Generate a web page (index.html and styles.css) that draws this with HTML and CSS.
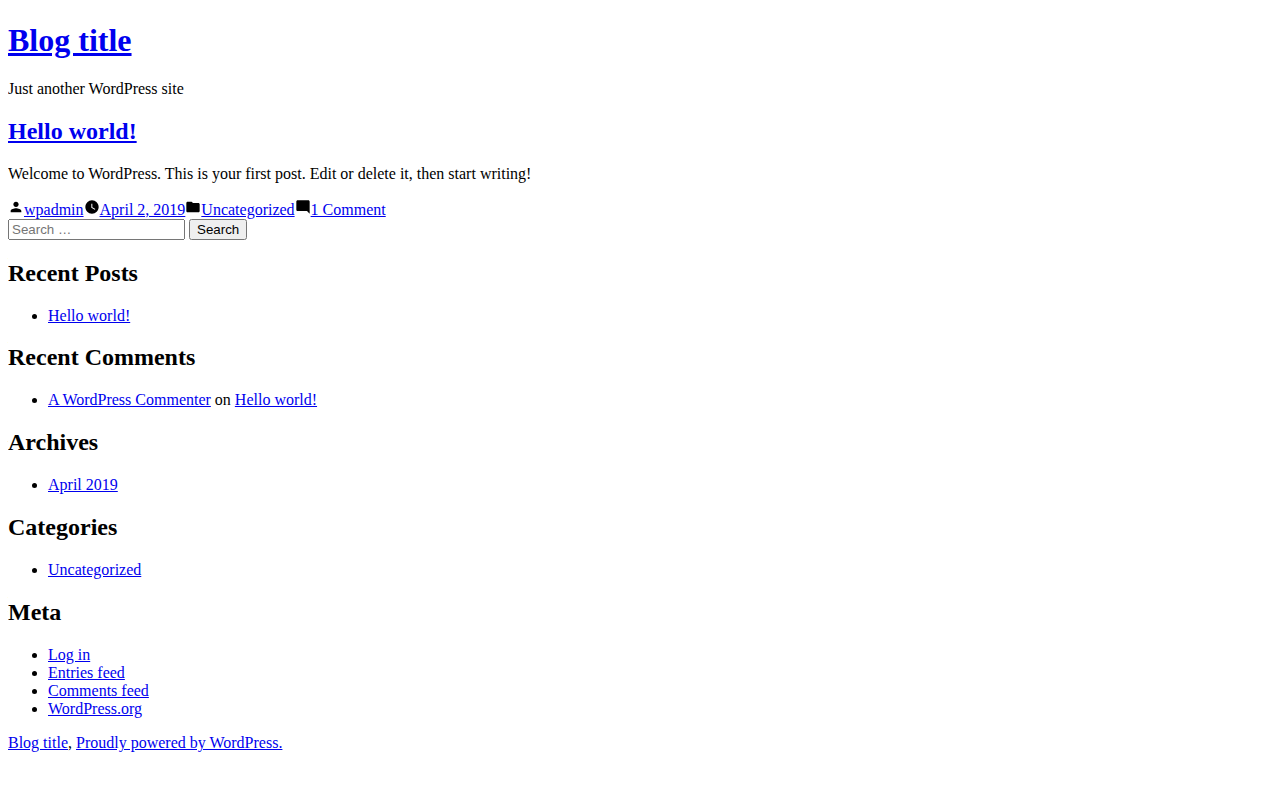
FILE: index.html
```html
<!DOCTYPE html>
<html lang="en">
<head>
    <meta charset="UTF-8">
    <meta name="viewport" content="width=device-width, initial-scale=1.0">
    <title>Blog title</title>
    <link rel="stylesheet" href="styles.css">
</head>
<body>
    <header>
        <h1 class="site-title"><a href="#">Blog title</a></h1>
        <p>Just another WordPress site</p>
    </header>

    <article>
        <h2><a href="#">Hello world!</a></h2>
        <p>Welcome to WordPress. This is your first post. Edit or delete it, then start writing!</p>
        <footer class="entry-footer">
            <svg class="icon" viewBox="0 0 24 24"><path d="M12 12c2.21 0 4-1.79 4-4s-1.79-4-4-4-4 1.79-4 4 1.79 4 4 4zm0 2c-2.67 0-8 1.34-8 4v2h16v-2c0-2.66-5.33-4-8-4z"/></svg><a href="#">wpadmin</a><svg class="icon" viewBox="0 0 24 24"><path d="M12 2C6.500 2 2 6.500 2 12s4.500 10 10 10 10-4.500 10-10S17.500 2 12 2zm4.200 14.200L11 13V7h1.500v5.200l4.500 2.700-.8 1.300z"/></svg><a href="#">April 2, 2019</a><svg class="icon" viewBox="0 0 24 24"><path d="M10 4H4c-1.100 0-2 .9-2 2v12c0 1.100.9 2 2 2h16c1.100 0 2-.9 2-2V8c0-1.100-.9-2-2-2h-8l-2-2z"/></svg><a href="#">Uncategorized</a><svg class="icon" viewBox="0 0 24 24"><path d="M21.990 4c0-1.100-.89-2-1.990-2H4c-1.100 0-2 .9-2 2v12c0 1.100.9 2 2 2h14l4 4-.01-18z"/></svg><a href="#">1 Comment</a>
        </footer>
    </article>

    <aside>
        <form class="search-form">
            <input class="search-field" type="search" placeholder="Search …">
            <input type="submit" value="Search">
        </form>

        <h2>Recent Posts</h2>
        <ul>
            <li><a href="#">Hello world!</a></li>
        </ul>

        <h2>Recent Comments</h2>
        <ul>
            <li><a href="#">A WordPress Commenter</a> on <a href="#">Hello world!</a></li>
        </ul>

        <h2>Archives</h2>
        <ul>
            <li><a href="#">April 2019</a></li>
        </ul>

        <h2>Categories</h2>
        <ul>
            <li><a href="#">Uncategorized</a></li>
        </ul>

        <h2>Meta</h2>
        <ul>
            <li><a href="#">Log in</a></li>
            <li><a href="#">Entries feed</a></li>
            <li><a href="#">Comments feed</a></li>
            <li><a href="#">WordPress.org</a></li>
        </ul>
    </aside>

    <footer class="site-footer">
        <a href="#">Blog title</a>, <a href="#">Proudly powered by WordPress.</a>
    </footer>
</body>
</html>
```

FILE: styles.css
```css
body {
    font-family: "Liberation Serif", "Times New Roman", serif;
    color: #000;
    background: #fff;
}

a {
    color: #0000ee;
}

.site-title {
    margin-top: 14px;
    margin-bottom: 20.88px;
}

.icon {
    width: 16px;
    height: 16px;
    fill: currentColor;
    vertical-align: baseline;
}

.search-form input {
    font-family: "Liberation Sans", Arial, sans-serif;
}

.search-field {
    width: 177px;
    box-sizing: border-box;
}

.site-footer {
    margin: 16px 0;
}
```
